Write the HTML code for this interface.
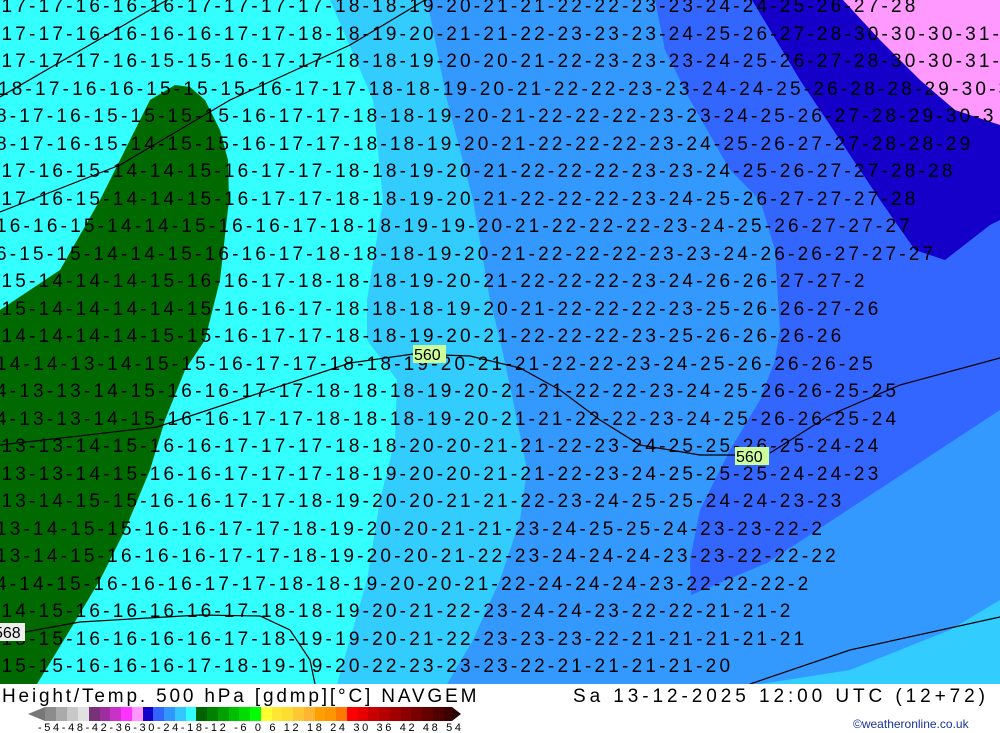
<!DOCTYPE html>
<html><head><meta charset="utf-8"><style>
html,body{margin:0;padding:0;background:#fff;}
body{width:1000px;height:733px;overflow:hidden;position:relative;font-family:"Liberation Sans",sans-serif;}
svg{display:block;}
.t{font-family:"Liberation Sans",sans-serif;font-size:19px;letter-spacing:3.2px;fill:#000;}
</style></head><body>
<svg width="1000" height="733" viewBox="0 0 1000 733" xmlns="http://www.w3.org/2000/svg">
<rect x="0" y="0" width="1000" height="684" fill="#33ffff"/>
<!-- light blue -->
<path d="M330,0 L373,100 L383,200 L367,300 L367,340 L397,380 L395,440 L380,500 L367,580 L337,684 L1000,684 L1000,0 Z" fill="#33ccff"/>
<!-- mid blue -->
<path d="M427,0 L447,100 L473,200 L490,300 L500,340 L513,400 L527,470 L520,520 L500,580 L473,640 L447,684 L760,684 L850,670 L950,630 L1000,600 L1000,0 Z" fill="#3399ff"/>
<!-- blue -->
<path d="M655,0 L665,50 L690,100 L730,170 L760,200 L775,250 L780,330 L775,360 L760,400 L730,450 L700,510 L690,560 L691,595 L767,563 L1000,410 L1000,0 Z" fill="#3366ff"/>
<!-- dark blue -->
<path d="M752,0 L800,80 L840,140 L880,200 L915,250 L945,260 L990,225 L1000,220 L1000,0 Z" fill="#1400c8"/>
<!-- magenta -->
<path d="M843,0 L880,40 L920,80 L955,110 L1000,125 L1000,0 Z" fill="#ff99ff"/>
<!-- green -->
<path d="M0,310 L60,270 L100,200 L130,140 L150,100 L175,85 L190,87 L205,100 L220,130 L228,160 L229,200 L220,280 L205,340 L185,370 L165,420 L150,470 L125,530 L100,580 L70,630 L37,684 L0,684 Z" fill="#006a00"/>
<!-- contour lines -->
<g fill="none" stroke="#000" stroke-width="1.2">
<path d="M0,97 L167,0"/>
<path d="M0,212 L120,165 L230,100 L350,45 L425,0"/>
<path d="M0,445 L157,427 L350,363 L413,354 L470,356 L520,368 L560,390 L600,420 L640,445 L700,455 L735,455"/>
<path d="M770,453 L830,415 L900,385 L1000,358"/>
<path d="M25,632 L80,622 L200,615 L260,616 L290,630 L310,660 L315,684"/>
<path d="M750,684 L850,650 L1000,617"/>
</g>
<g class="t">
<text x="-8" y="12">-17-17-16-16-16-17-17-17-17-18-18-19-20-21-21-22-22-23-23-24-24-25-26-27-28</text>
<text x="-8" y="40">-17-17-16-16-16-16-17-17-18-18-19-20-21-21-22-23-23-23-24-25-26-27-28-30-30-30-31-31</text>
<text x="-8" y="67">-17-17-17-16-15-15-16-17-17-18-18-19-20-20-21-22-23-23-23-24-25-26-27-28-30-30-31-31</text>
<text x="-2" y="95">18-17-16-16-15-15-15-16-17-17-18-18-19-20-21-22-22-23-23-24-24-25-26-28-28-29-30-31-3</text>
<text x="-4" y="122">8-17-16-15-15-15-15-16-17-17-18-18-19-20-21-22-22-22-23-23-24-25-26-27-28-29-30-3</text>
<text x="-4" y="150">8-17-16-15-14-15-15-16-17-17-18-18-19-20-21-22-22-22-23-24-25-26-27-27-28-28-29</text>
<text x="-8" y="177">-17-16-15-14-14-15-16-17-17-18-18-19-20-21-22-22-22-23-23-24-25-26-27-27-28-28</text>
<text x="-8" y="205">-17-16-15-14-14-15-16-17-17-18-18-19-20-21-22-22-22-23-24-25-26-27-27-27-28</text>
<text x="-4" y="232">16-16-15-14-14-15-16-16-17-18-18-19-19-20-21-22-22-22-23-24-25-26-27-27-27</text>
<text x="-4" y="260">6-15-15-14-14-15-16-16-17-18-18-18-19-20-21-22-22-22-23-23-24-26-26-27-27-27</text>
<text x="-8" y="287">-15-14-14-14-15-16-16-17-18-18-18-19-20-21-22-22-22-23-24-26-26-27-27-2</text>
<text x="-8" y="315">-15-14-14-14-14-15-16-16-17-18-18-18-19-20-21-22-22-22-23-25-26-26-27-26</text>
<text x="-8" y="342">-14-14-14-14-15-15-16-17-17-18-18-19-20-21-22-22-22-23-25-26-26-26-26</text>
<text x="-4" y="370">14-14-13-14-15-15-16-17-17-18-18-19-20-21-21-22-22-23-24-25-26-26-26-25</text>
<text x="-4" y="397">4-13-13-14-15-16-16-17-17-18-18-18-19-20-21-21-22-22-23-24-25-26-26-25-25</text>
<text x="-4" y="425">4-13-13-14-15-16-16-17-17-18-18-18-19-20-21-21-22-22-23-24-25-26-26-25-24</text>
<text x="-8" y="452">-13-13-14-15-16-16-17-17-17-18-18-20-20-21-21-22-23-24-25-25-26-25-24-24</text>
<text x="-8" y="480">-13-13-14-15-16-16-17-17-17-18-19-20-20-21-21-22-23-24-25-25-25-24-24-23</text>
<text x="-8" y="507">-13-14-15-15-16-16-17-17-18-19-20-20-21-21-22-23-24-25-25-24-24-23-23</text>
<text x="-4" y="535">13-14-15-15-16-16-17-17-18-19-20-20-21-21-23-24-25-25-24-23-23-22-2</text>
<text x="-4" y="562">13-14-15-16-16-16-17-17-18-19-20-20-21-22-23-24-24-24-23-23-22-22-22</text>
<text x="-4" y="590">4-14-15-16-16-16-17-17-18-18-19-20-20-21-22-24-24-24-23-22-22-22-2</text>
<text x="-8" y="617">-14-15-16-16-16-16-17-18-18-19-20-21-22-23-24-24-23-22-22-21-21-2</text>
<text x="-8" y="645">-15-15-16-16-16-16-17-18-19-19-20-21-22-23-23-23-22-21-21-21-21-21</text>
<text x="-8" y="672">-15-15-16-16-16-17-18-19-19-20-22-23-23-23-22-21-21-21-21-20</text>
</g>
<!-- labels -->
<rect x="413" y="345" width="33" height="18" fill="#ccff99"/>
<text x="414" y="360" font-family="Liberation Sans" font-size="16" fill="#000">560</text>
<rect x="735" y="447" width="34" height="18" fill="#ccff99"/>
<text x="736" y="462" font-family="Liberation Sans" font-size="16" fill="#000">560</text>
<rect x="0" y="623" width="25" height="18" fill="#eeeeee"/>
<text x="-6" y="638" font-family="Liberation Sans" font-size="16" fill="#000">568</text>
<!-- bottom -->
<rect x="0" y="684" width="1000" height="49" fill="#fff"/>
<text x="2" y="702" font-family="Liberation Sans" font-size="19" letter-spacing="1.6" fill="#000" textLength="476" lengthAdjust="spacing">Height/Temp. 500 hPa [gdmp][°C] NAVGEM</text>
<text x="573" y="702" font-family="Liberation Sans" font-size="19" fill="#000" textLength="412" lengthAdjust="spacing">Sa 13-12-2025 12:00 UTC (12+72)</text>
<polygon points="28,714 45,707 45,721" fill="#777"/>
<g>
<rect x="45" y="707" width="11" height="14" fill="#8c8c8c"/>
<rect x="56" y="707" width="11" height="14" fill="#aaaaaa"/>
<rect x="67" y="707" width="11" height="14" fill="#c8c8c8"/>
<rect x="78" y="707" width="11" height="14" fill="#e1e1e1"/>
<rect x="89" y="707" width="11" height="14" fill="#783278"/>
<rect x="100" y="707" width="11" height="14" fill="#a02da0"/>
<rect x="110" y="707" width="11" height="14" fill="#c832c8"/>
<rect x="121" y="707" width="11" height="14" fill="#ff32ff"/>
<rect x="132" y="707" width="11" height="14" fill="#ff96ff"/>
<rect x="143" y="707" width="11" height="14" fill="#1400c8"/>
<rect x="153" y="707" width="11" height="14" fill="#3264ff"/>
<rect x="164" y="707" width="11" height="14" fill="#3296ff"/>
<rect x="175" y="707" width="11" height="14" fill="#32c8ff"/>
<rect x="186" y="707" width="11" height="14" fill="#32ffff"/>
<rect x="196" y="707" width="11" height="14" fill="#006400"/>
<rect x="207" y="707" width="11" height="14" fill="#008200"/>
<rect x="218" y="707" width="11" height="14" fill="#00a000"/>
<rect x="229" y="707" width="11" height="14" fill="#00be00"/>
<rect x="239" y="707" width="11" height="14" fill="#00dc00"/>
<rect x="250" y="707" width="11" height="14" fill="#00ff00"/>
<rect x="261" y="707" width="11" height="14" fill="#ffff32"/>
<rect x="272" y="707" width="11" height="14" fill="#ffe632"/>
<rect x="282" y="707" width="11" height="14" fill="#ffdc32"/>
<rect x="293" y="707" width="11" height="14" fill="#ffc832"/>
<rect x="304" y="707" width="11" height="14" fill="#ffb432"/>
<rect x="315" y="707" width="11" height="14" fill="#ffa000"/>
<rect x="325" y="707" width="11" height="14" fill="#ff9600"/>
<rect x="336" y="707" width="11" height="14" fill="#ff7800"/>
<rect x="347" y="707" width="11" height="14" fill="#ff0000"/>
<rect x="358" y="707" width="11" height="14" fill="#e60000"/>
<rect x="368" y="707" width="11" height="14" fill="#c80000"/>
<rect x="379" y="707" width="11" height="14" fill="#b40000"/>
<rect x="390" y="707" width="11" height="14" fill="#a00000"/>
<rect x="401" y="707" width="11" height="14" fill="#8c0000"/>
<rect x="411" y="707" width="11" height="14" fill="#780000"/>
<rect x="422" y="707" width="11" height="14" fill="#640000"/>
<rect x="433" y="707" width="11" height="14" fill="#500000"/>
<rect x="444" y="707" width="8" height="14" fill="#3c0000"/>
</g>
<polygon points="452,707 461,714 452,721" fill="#2a0000"/>
<text x="38" y="731" font-family="Liberation Sans" font-size="11" fill="#000" textLength="423" lengthAdjust="spacing">-54-48-42-36-30-24-18-12 -6  0  6  12  18  24  30  36  42  48  54</text>
<text x="853" y="728" font-family="Liberation Sans" font-size="12" fill="#1a3399">©weatheronline.co.uk</text>
</svg>
</body></html>
